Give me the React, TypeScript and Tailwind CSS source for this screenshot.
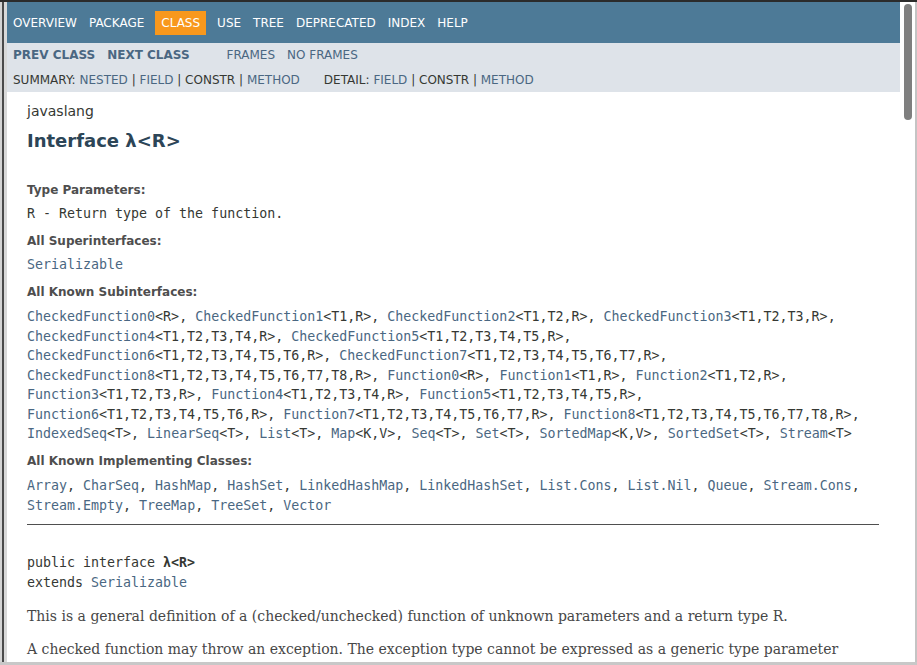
import React from 'react'

const SANS = "font-['DejaVu_Sans',Arial,sans-serif]"
const MONO = "font-['DejaVu_Sans_Mono',monospace]"
const SERIF = "font-['DejaVu_Serif',Georgia,serif]"

type Seg = [string, string]

const subLines: Seg[][] = [
  [['CheckedFunction0', '<R>'], ['CheckedFunction1', '<T1,R>'], ['CheckedFunction2', '<T1,T2,R>'], ['CheckedFunction3', '<T1,T2,T3,R>']],
  [['CheckedFunction4', '<T1,T2,T3,T4,R>'], ['CheckedFunction5', '<T1,T2,T3,T4,T5,R>']],
  [['CheckedFunction6', '<T1,T2,T3,T4,T5,T6,R>'], ['CheckedFunction7', '<T1,T2,T3,T4,T5,T6,T7,R>']],
  [['CheckedFunction8', '<T1,T2,T3,T4,T5,T6,T7,T8,R>'], ['Function0', '<R>'], ['Function1', '<T1,R>'], ['Function2', '<T1,T2,R>']],
  [['Function3', '<T1,T2,T3,R>'], ['Function4', '<T1,T2,T3,T4,R>'], ['Function5', '<T1,T2,T3,T4,T5,R>']],
  [['Function6', '<T1,T2,T3,T4,T5,T6,R>'], ['Function7', '<T1,T2,T3,T4,T5,T6,T7,R>'], ['Function8', '<T1,T2,T3,T4,T5,T6,T7,T8,R>']],
  [['IndexedSeq', '<T>'], ['LinearSeq', '<T>'], ['List', '<T>'], ['Map', '<K,V>'], ['Seq', '<T>'], ['Set', '<T>'], ['SortedMap', '<K,V>'], ['SortedSet', '<T>'], ['Stream', '<T>']],
]

const implLines: string[][] = [
  ['Array', 'CharSeq', 'HashMap', 'HashSet', 'LinkedHashMap', 'LinkedHashSet', 'List.Cons', 'List.Nil', 'Queue', 'Stream.Cons'],
  ['Stream.Empty', 'TreeMap', 'TreeSet', 'Vector'],
]

const navItems = ['OVERVIEW', 'PACKAGE', 'CLASS', 'USE', 'TREE', 'DEPRECATED', 'INDEX', 'HELP']

function Dt({ children, className = '' }: { children: React.ReactNode; className?: string }) {
  return <div className={`${SANS} text-[12px] font-bold leading-[14px] text-[#4e4e4e] ${className}`}>{children}</div>
}

function Sep() {
  return <span className="text-[#353833]">&nbsp;|&nbsp;</span>
}

export default function App() {
  return (
    <div className="flex h-[665px] w-[917px] flex-col overflow-hidden bg-white">
      <div className="h-[2px] shrink-0 bg-[#2b2b2b]" />
      <div className="flex min-h-0 flex-1">
        <div className="flex w-[7px] shrink-0">
          <div className="w-[2px] bg-[#d4d4d4]" />
          <div className="w-[2px] bg-[#4a4a4a]" />
          <div className="w-[3px] bg-[#d9d9d9]" />
        </div>

        <div className="min-w-0 flex-1 overflow-hidden">
          {/* top nav */}
          <div className={`${SANS} flex h-[41px] bg-[#4d7a97] pt-[9px] text-[12px] leading-[14px] text-white`}>
            {navItems.map((item) => (
              <div
                key={item}
                className={`h-[24px] px-[6px] py-[5px] ${item === 'CLASS' ? 'mx-[5px] bg-[#f8981d]' : ''}`}
              >
                {item}
              </div>
            ))}
          </div>

          {/* sub nav */}
          <div className={`${SANS} bg-[#dee3e9] text-[12px] leading-[14px]`}>
            <div className="flex h-[24px] items-center">
              <div className="mr-[25px] flex font-bold text-[#4a6782]">
                <span className="px-[6px]">PREV CLASS</span>
                <span className="px-[6px]">NEXT CLASS</span>
              </div>
              <div className="flex text-[#4a6782]">
                <span className="px-[6px]">FRAMES</span>
                <span className="px-[6px]">NO FRAMES</span>
              </div>
            </div>
            <div className="flex h-[25px] items-center pl-[6px] text-[#353833]">
              <div className="mr-[24px]">
                SUMMARY:&nbsp;<span className="text-[#4a6782]">NESTED</span>
                <Sep />
                <span className="text-[#4a6782]">FIELD</span>
                <Sep />
                CONSTR
                <Sep />
                <span className="text-[#4a6782]">METHOD</span>
              </div>
              <div>
                DETAIL:&nbsp;<span className="text-[#4a6782]">FIELD</span>
                <Sep />
                CONSTR
                <Sep />
                <span className="text-[#4a6782]">METHOD</span>
              </div>
            </div>
          </div>

          {/* content */}
          <div className="pl-[20px] pr-[21px]">
            <div className={`${SANS} mt-[10px] text-[14px] leading-[18px] text-[#353833]`}>javaslang</div>
            <h2 className={`${SANS} mt-[10px] text-[18px] font-bold leading-[22px] text-[#2c4557]`}>
              Interface λ&lt;R&gt;
            </h2>

            <Dt className="mt-[31px]">Type Parameters:</Dt>
            <div className={`${MONO} mt-[7px] text-[13.3px] leading-[19.5px] text-[#353833]`}>
              R - Return type of the function.
            </div>

            <Dt className="mt-[10px]">All Superinterfaces:</Dt>
            <div className={`${MONO} mt-[7px] text-[13.3px] leading-[19.5px] text-[#4a6782]`}>Serializable</div>

            <Dt className="mt-[11px]">All Known Subinterfaces:</Dt>
            <div className={`${MONO} mt-[8px] text-[13.3px] leading-[19.5px] text-[#353833]`}>
              {subLines.map((line, li) => (
                <div key={li} className="whitespace-nowrap">
                  {line.map(([name, params], i) => (
                    <span key={name}>
                      <span className="text-[#4a6782]">{name}</span>
                      {params}
                      {li < subLines.length - 1 || i < line.length - 1 ? (i < line.length - 1 ? ', ' : ',') : ''}
                    </span>
                  ))}
                </div>
              ))}
            </div>

            <Dt className="mt-[10.5px]">All Known Implementing Classes:</Dt>
            <div className={`${MONO} mt-[8px] text-[13.3px] leading-[19.5px] text-[#353833]`}>
              {implLines.map((line, li) => (
                <div key={li} className="whitespace-nowrap">
                  {line.map((name, i) => (
                    <span key={name}>
                      <span className="text-[#4a6782]">{name}</span>
                      {li < implLines.length - 1 || i < line.length - 1 ? (i < line.length - 1 ? ', ' : ',') : ''}
                    </span>
                  ))}
                </div>
              ))}
            </div>

            <div className="mt-[9px] h-px bg-[#4f4f4f]" />

            <div className={`${MONO} mt-[28px] text-[13.3px] leading-[19.5px] text-[#353833]`}>
              <div>
                public interface <span className="font-bold">λ&lt;R&gt;</span>
              </div>
              <div>
                extends <span className="text-[#4a6782]">Serializable</span>
              </div>
            </div>

            <p className={`${SERIF} mt-[13.5px] text-[14px] leading-[20px] text-[#474747]`}>
              This is a general definition of a (checked/unchecked) function of unknown parameters and a return type R.
            </p>
            <p className={`${SERIF} mt-[14px] text-[14px] leading-[19px] text-[#474747]`}>
              A checked function may throw an exception. The exception type cannot be expressed as a generic type parameter
              because of Java type inference limitations.
            </p>
          </div>
        </div>

        {/* scrollbar */}
        <div className="w-[15px] shrink-0 bg-white pl-[4px] pt-[2px]">
          <div className="h-[116px] w-[8px] rounded-full bg-[#7f7f7f]" />
        </div>
        <div className="w-[2px] shrink-0 bg-[#c4c4c4]" />
      </div>
      <div className="h-[3px] shrink-0 bg-[#c8c8c8]" />
    </div>
  )
}
